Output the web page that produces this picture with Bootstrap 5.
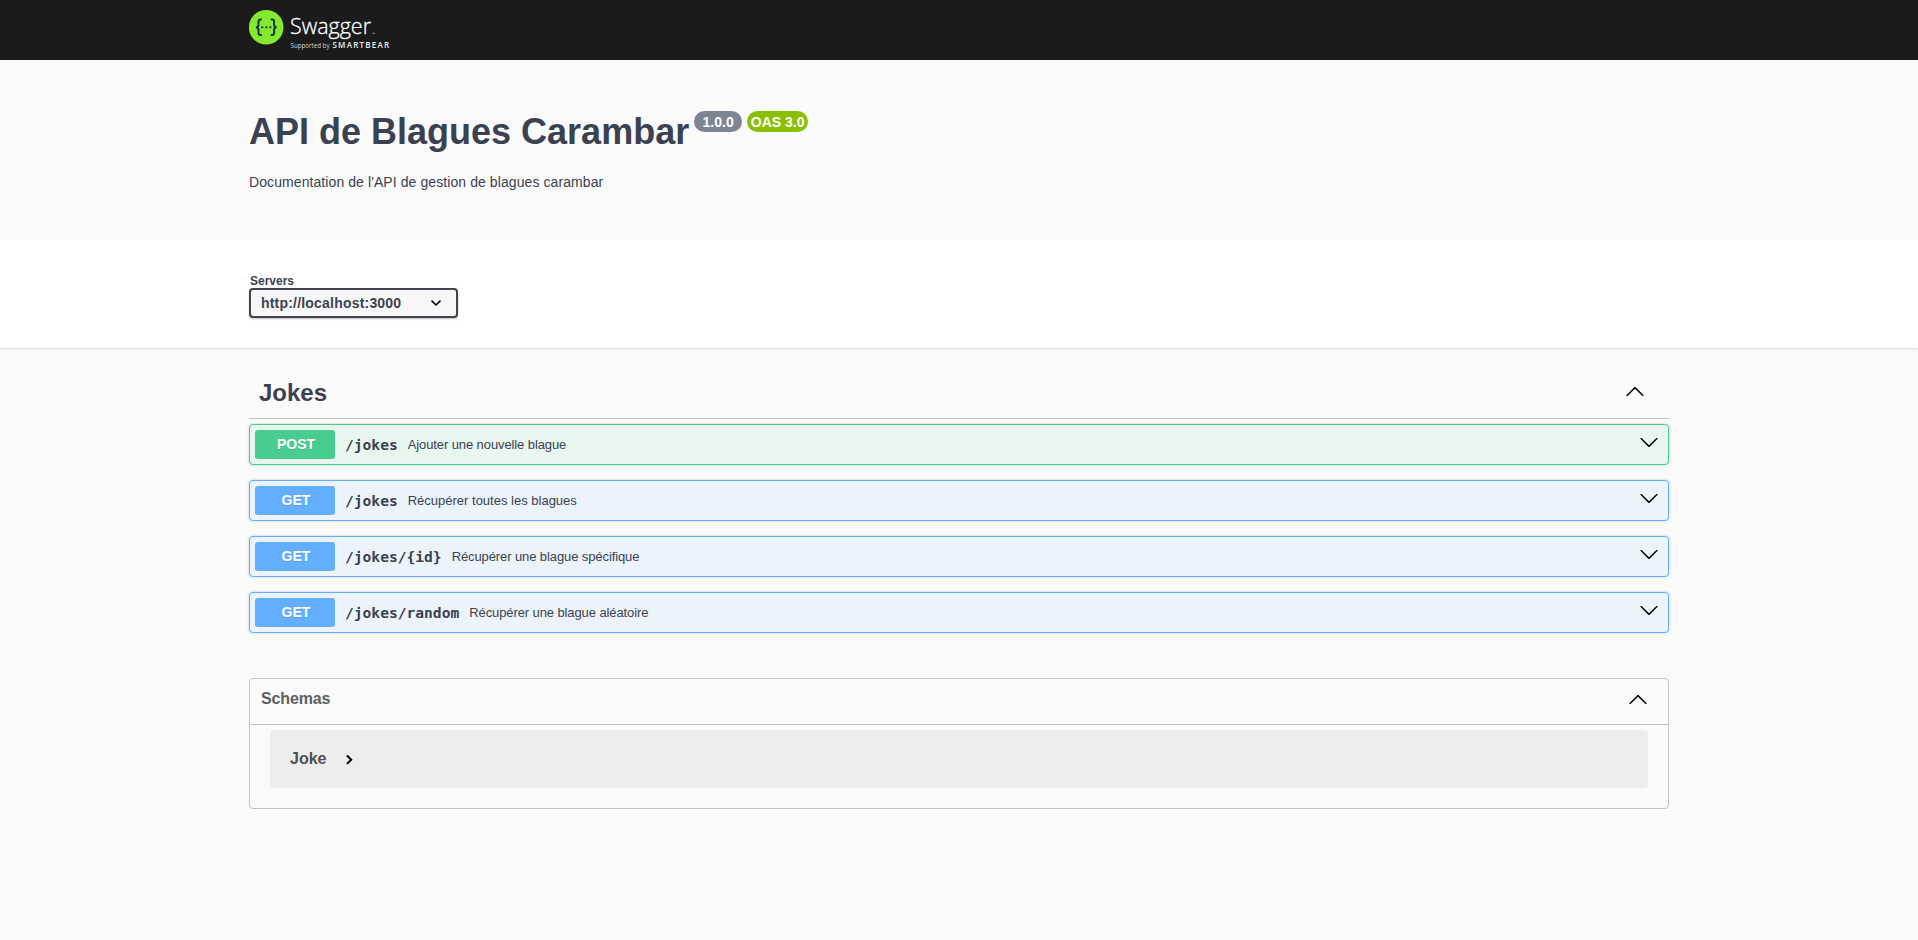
<!DOCTYPE html>
<html lang="fr">
<head>
<meta charset="utf-8">
<meta name="viewport" content="width=device-width, initial-scale=1">
<title>API de Blagues Carambar</title>
<link rel="stylesheet" href="https://cdn.jsdelivr.net/npm/bootstrap@5.3.0/dist/css/bootstrap.min.css">
<style>
  body { background: #fafafa; color: #3b4151; font-family: "Liberation Sans", Arial, sans-serif; font-size: 14px; line-height: 1.15; }
  .wrap { width: 100%; max-width: 1460px; margin: 0 auto; padding: 0 20px; }
  .topbar { background: #1b1b1b; height: 60px; }
  .topbar svg { display: block; }
  .info { height: 180px; padding-top: 51px; }
  .info h1 { font-size: 36px; font-weight: 700; line-height: 41px; margin: 0; white-space: nowrap; }
  .pill { height: 21px; line-height: 22px; border-radius: 57px; font-size: 14px; font-weight: 700; color: #fff; background: #7d8492; text-align: center; }
  .pill-version { width: 48px; margin-left: 5px; }
  .pill-oas { width: 61px; margin-left: 5px; background: #89bf04; }
  .info p { margin: 22px 0 0; line-height: 16px; letter-spacing: .085px; }
  .servers { background: #fff; height: 108px; padding-top: 34px; box-shadow: 0 1px 2px rgba(0,0,0,.15); }
  .servers label { display: block; font-size: 12px; font-weight: 700; line-height: 14px; padding-left: 1px; }
  .server-select { width: 209px; height: 30px; border: 2px solid #41444e; border-radius: 4px; background: #f7f7f7; box-shadow: 0 1px 2px rgba(0,0,0,.25); font-size: 14px; font-weight: 700; letter-spacing: .2px; padding: 0 14px 0 10px; }
  .tag-head { height: 71px; border-bottom: 1px solid #c1c3c8; padding: 17px 24px 0 10px; margin-bottom: 5px; }
  .tag-head h2 { font-size: 24px; font-weight: 700; line-height: 28px; margin: 0; padding-top: 2px; }
  .op { height: 41px; border: 1px solid #61affe; border-radius: 4px; background: #ebf3fb; box-shadow: 0 0 3px rgba(0,0,0,.19); padding: 0 9px 0 5px; margin-bottom: 15px; }
  .op .verb { width: 80px; height: 29px; line-height: 29px; border-radius: 3px; background: #61affe; color: #fff; font-size: 14px; font-weight: 700; text-align: center; padding-left: 2px; text-shadow: 0 1px 0 rgba(0,0,0,.1); }
  .op.post { border-color: #49cc90; background: #e8f6f0; }
  .op.post .verb { background: #49cc90; }
  .op code { font: 700 14.6px/18px "DejaVu Sans Mono", monospace; color: #3b4151; margin-left: 10px; }
  .op .about { font-size: 13px; line-height: 15px; margin-left: 10px; }
  .op .tight { letter-spacing: -.1px; }
  .op svg { margin-bottom: 6px; }
  .schemas { border: 1px solid #c1c3c8; border-radius: 4px; margin-top: 45px; height: 131px; }
  .schemas header { height: 46px; border-bottom: 1px solid #c1c3c8; padding: 0 20px 3px 11px; }
  .schemas h3 { font-size: 16px; font-weight: 700; line-height: 18px; margin: 0 0 2px; color: #606060; letter-spacing: -.15px; }
  .model { height: 58px; margin: 5px 20px 0; padding: 0 20px; border-radius: 4px; background: #ededed; font-size: 16px; font-weight: 700; line-height: 18px; color: #505050; }
</style>
</head>
<body>
<svg width="0" height="0" class="position-absolute" aria-hidden="true">
  <symbol id="arrow" viewBox="0 0 20 20"><path d="M17.418 6.109c.272-.268.709-.268.979 0s.271.701 0 .969l-7.908 7.83c-.27.268-.707.268-.979 0l-7.908-7.83c-.27-.268-.27-.701 0-.969.271-.268.709-.268.979 0L10 13.25z"/></symbol>
</svg>
<header class="topbar">
  <div class="wrap">
    <svg width="150" height="60" viewBox="0 0 150 60" role="img" aria-label="Swagger">
      <circle cx="17.2" cy="27.3" r="17.3" fill="#85ea2d"/>
      <g fill="none" stroke="#173647" stroke-width="2">
        <path d="M12.8 19.5h-1.2c-1.7 0-2.1.9-2.1 2.3v2.6c0 1.8-.7 2.9-2.6 2.9 1.9 0 2.6 1.1 2.6 2.9v2.6c0 1.5.4 2.3 2.1 2.3h1.2"/>
        <path d="M21.8 19.5H23c1.7 0 2.1.9 2.1 2.3v2.6c0 1.8.7 2.9 2.6 2.9-1.9 0-2.6 1.1-2.6 2.9v2.6c0 1.5-.4 2.3-2.1 2.3h-1.2"/>
      </g>
      <g fill="#173647"><circle cx="13.2" cy="27.3" r="1.15"/><circle cx="17.3" cy="27.3" r="1.15"/><circle cx="21.4" cy="27.3" r="1.15"/></g>
      <text x="41" y="34.3" fill="#fff" stroke="#fff" stroke-width=".3" font-family="Open Sans" font-weight="300" font-size="22.5" textLength="81" lengthAdjust="spacingAndGlyphs">Swagger</text>
      <path d="M123.5 33.3h2.4" stroke="#fff" stroke-width=".8" opacity=".7"/>
      <text x="41.5" y="48.3" fill="#d5d5d5" font-family="Open Sans" font-size="6.5" textLength="39" lengthAdjust="spacingAndGlyphs">Supported by</text>
      <text x="83.5" y="48.3" fill="#eee" font-family="Open Sans" font-weight="600" font-size="8" textLength="56.5" lengthAdjust="spacing">SMARTBEAR</text>
    </svg>
  </div>
</header>
<main>
  <section class="info">
    <div class="wrap">
      <div class="d-flex align-items-start">
        <h1>API de Blagues Carambar</h1>
        <span class="pill pill-version">1.0.0</span><span class="pill pill-oas">OAS 3.0</span>
      </div>
      <p>Documentation de l'API de gestion de blagues carambar</p>
    </div>
  </section>
  <section class="servers">
    <div class="wrap">
      <label>Servers</label>
      <div class="server-select d-flex align-items-center justify-content-between" role="button">
        <span>http://localhost:3000</span>
        <svg width="12" height="8" viewBox="0 0 12 8" fill="none" stroke="#000" stroke-width="1.6"><path d="M1.5 1.7 6 6l4.5-4.3"/></svg>
      </div>
    </div>
  </section>
  <div class="wrap">
    <section>
      <div class="tag-head d-flex align-items-center justify-content-between">
        <h2>Jokes</h2>
        <svg width="20" height="20" style="transform:rotate(180deg)"><use href="#arrow"/></svg>
      </div>
      <div class="op post d-flex align-items-center">
        <span class="verb">POST</span><code>/jokes</code><span class="about tight">Ajouter une nouvelle blague</span>
        <svg class="ms-auto" width="20" height="20"><use href="#arrow"/></svg>
      </div>
      <div class="op d-flex align-items-center">
        <span class="verb">GET</span><code>/jokes</code><span class="about">Récupérer toutes les blagues</span>
        <svg class="ms-auto" width="20" height="20"><use href="#arrow"/></svg>
      </div>
      <div class="op d-flex align-items-center">
        <span class="verb">GET</span><code>/jokes/{id}</code><span class="about tight">Récupérer une blague spécifique</span>
        <svg class="ms-auto" width="20" height="20"><use href="#arrow"/></svg>
      </div>
      <div class="op d-flex align-items-center">
        <span class="verb">GET</span><code>/jokes/random</code><span class="about tight">Récupérer une blague aléatoire</span>
        <svg class="ms-auto" width="20" height="20"><use href="#arrow"/></svg>
      </div>
    </section>
    <section class="schemas">
      <header class="d-flex align-items-center justify-content-between">
        <h3>Schemas</h3>
        <svg width="20" height="20" style="transform:rotate(180deg)"><use href="#arrow"/></svg>
      </header>
      <div class="model d-flex align-items-center">
        <span>Joke</span>
        <svg class="ms-3" width="14" height="14" viewBox="0 0 14 14" fill="none" stroke="#000" stroke-width="2"><path d="m5 3.5 4.2 4.2L5 11.9"/></svg>
      </div>
    </section>
  </div>
</main>
<script src="https://cdn.jsdelivr.net/npm/bootstrap@5.3.0/dist/js/bootstrap.bundle.min.js"></script>
</body>
</html>
